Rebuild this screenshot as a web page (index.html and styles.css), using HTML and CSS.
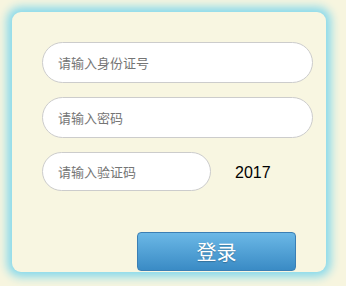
FILE: index.html
```html
<!DOCTYPE html>
<html>
<head>
<meta charset="utf-8">
<link rel="stylesheet" href="styles.css">
</head>
<body>
<div class="panel">
  <form class="form">
    <input class="field" type="text" placeholder="请输入身份证号">
    <input class="field" type="password" placeholder="请输入密码">
    <div class="code-row">
      <input class="field short" type="text" placeholder="请输入验证码">
      <span class="code">2017</span>
    </div>
    <button class="login" type="button">登录</button>
  </form>
</div>
</body>
</html>
```
FILE: styles.css
```css
html, body {
  margin: 0;
  padding: 0;
  background: #f7f5df;
}
body {
  width: 346px;
  height: 286px;
  padding: 12px;
  box-sizing: border-box;
  overflow: hidden;
  font-family: "Noto Sans CJK SC", "Liberation Sans", sans-serif;
}
.panel {
  width: 314px;
  height: 260px;
  background: #f8f6e1;
  border-radius: 9px;
  box-shadow: 0 0 10px 5px #86d9ec;
  box-sizing: border-box;
  padding: 30px 0 0 30px;
}
.form {
  display: flex;
  flex-direction: column;
  gap: 14px;
}
.field {
  width: 271px;
  height: 41px;
  box-sizing: border-box;
  border: 1px solid #cccccc;
  border-radius: 21px;
  background: #ffffff;
  padding: 0 0 0 15px;
  font-family: "Noto Sans CJK SC", "Liberation Sans", sans-serif;
  font-size: 13px;
  outline: none;
  margin: 0;
}
.field::placeholder {
  color: #757575;
}
.field.short {
  width: 169px;
  height: 39px;
}
.code-row {
  display: flex;
  align-items: center;
  gap: 24px;
}
.code {
  font-family: "Liberation Sans", Arial, sans-serif;
  font-size: 16px;
  color: #000;
  padding-top: 2px;
}
.login {
  margin: 27px 0 0 95px;
  width: 159px;
  height: 39px;
  border: 1px solid #3b7fb4;
  border-radius: 4px;
  background: linear-gradient(#6bb8e6, #3a8bc5);
  color: #ffffff;
  font-family: "Noto Sans CJK SC", "Liberation Sans", sans-serif;
  font-size: 20px;
  text-shadow: 0 1px 1px rgba(0, 0, 0, 0.25);
  padding: 0;
}
```
